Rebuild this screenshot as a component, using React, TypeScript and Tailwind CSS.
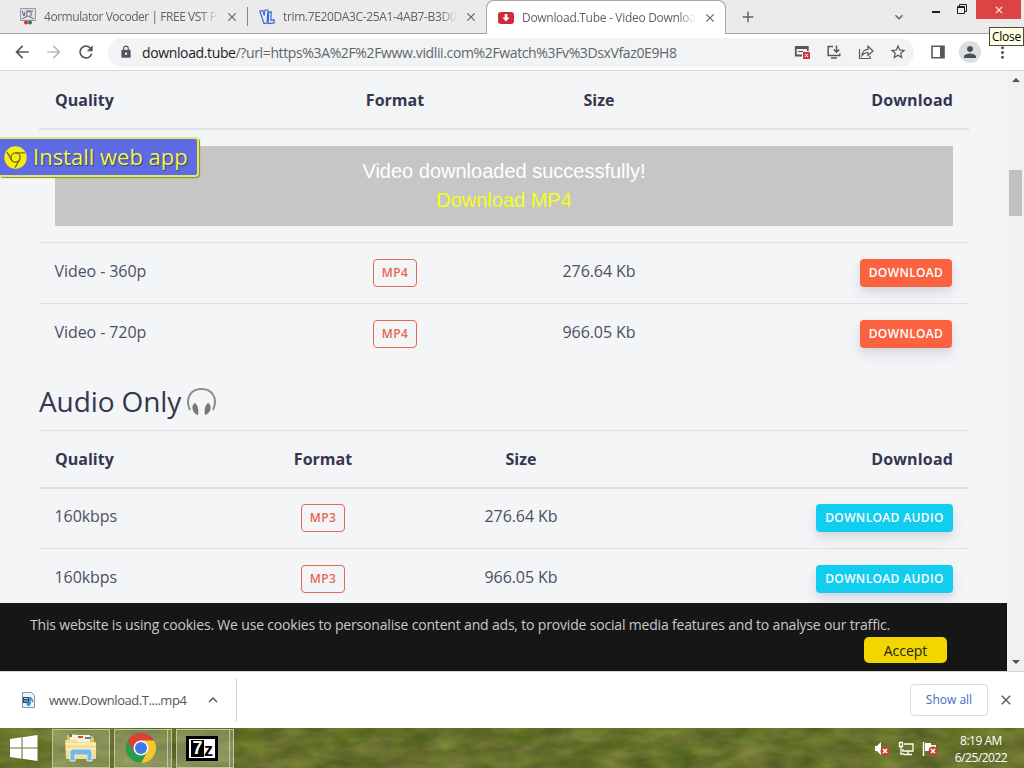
import type { ReactNode } from "react";
import { MdAdd, MdArrowBack, MdArrowForward, MdClose, MdExpandLess, MdExpandMore, MdLock, MdMoreVert, MdPerson, MdRefresh, MdStarBorder } from "react-icons/md";

type Row = { quality: string; format: string; size: string };

const videoRows: Row[] = [
    { quality: "Video - 360p", format: "MP4", size: "276.64 Kb" },
    { quality: "Video - 720p", format: "MP4", size: "966.05 Kb" },
];
const audioRows: Row[] = [
    { quality: "160kbps", format: "MP3", size: "276.64 Kb" },
    { quality: "160kbps", format: "MP3", size: "966.05 Kb" },
];

const videoCols = "grid-cols-[256px_200px_208px_1fr]";
const audioCols = "grid-cols-[184px_200px_196px_1fr]";

function VocoderIcon() {
    return (
        <svg width="16" height="17" viewBox="0 0 16 17" className="shrink-0">
            <path d="M.5.5h15v12H.5z" fill="#dfe1e6" stroke="#989ba3" />
            <path d="M2 3l2 5 1-4M6 3h7M10 9l4 2M2 11l5-3" stroke="#5d6374" fill="none" />
            <circle cx="9" cy="6" r="2.500" fill="none" stroke="#6b6f80" />
            <circle cx="6" cy="14.500" r="2" fill="#d12f39" />
            <circle cx="10" cy="14.500" r="2" fill="#277a45" />
        </svg>
    );
}

function VidliiIcon() {
    return (
        <svg width="16" height="16" viewBox="0 0 16 16" className="shrink-0">
            <path d="M.8 2.200l3-.7 1.400 5L6 1h3l-1 13-3 .5z" fill="#e4ecfb" stroke="#3c69cf" strokeWidth="1.200" />
            <path d="M9.700 3.200l2.600-.3-.5 8.200 3.400-.2v3l-6 .7z" fill="#e4ecfb" stroke="#3c69cf" strokeWidth="1.200" />
        </svg>
    );
}

function TubeIcon() {
    return (
        <svg width="16" height="12" viewBox="0 0 16 12" className="shrink-0">
            <rect width="16" height="12" rx="3" fill="#cf2a35" />
            <path d="M6.700 2h2.600v3.600h2.200L8 9.600 4.500 5.600h2.200z" fill="#fff" />
        </svg>
    );
}

function TabStrip() {
    return (
        <div className="flex h-[34px] w-full bg-[#ebebeb] text-[12px] text-[#5f6368]">
            <div className="flex w-[247px] items-center border-b border-[#a5a5a5] pl-5">
                <VocoderIcon />
                <span className="ml-2 w-[174px] whitespace-nowrap tracking-[-0.038em] mask-r-from-90%">4ormulator Vocoder | FREE VST P</span>
                <MdClose className="ml-[7px]" size={14} />
            </div>
            <div className="flex w-[239px] items-center border-b border-[#a5a5a5]">
                <span className="h-[19px] w-px bg-[#86888a]" />
                <span className="ml-[11px]"><VidliiIcon /></span>
                <span className="ml-2 w-[174px] whitespace-nowrap tracking-[-0.03em] mask-r-from-90%">trim.7E20DA3C-25A1-4AB7-B3D0</span>
                <MdClose className="ml-[7px]" size={14} />
            </div>
            <div className="flex w-[240px] items-center rounded-t-lg border-x border-t border-[#a5a5a5] bg-white pl-[11px]">
                <TubeIcon />
                <span className="ml-2 w-[174px] whitespace-nowrap tracking-[-0.025em] mask-r-from-90%">Download.Tube - Video Downloa</span>
                <MdClose className="ml-[7px]" size={14} />
            </div>
            <div className="flex flex-1 items-start border-b border-[#a5a5a5]">
                <MdAdd className="mt-[8px] ml-[13px]" size={18} />
                <MdExpandMore className="mt-[9px] ml-[134px]" size={16} />
                <span className="mt-[11px] ml-[25px] h-[2px] w-2 bg-[#1c1c1c]" />
                <svg className="mt-1 ml-[17px]" width="10" height="10" viewBox="0 0 10 10" fill="none" stroke="#1c1c1c">
                    <path d="M.5 2.500h7v7h-7zM.5 3.500h7" />
                    <path d="M2.500 2V.5h7v7H8" />
                </svg>
                <div className="ml-[9px] flex h-[19px] w-[45px] items-center justify-center bg-[#dd4245] text-white">
                    <MdClose size={12} />
                </div>
            </div>
        </div>
    );
}

function Toolbar() {
    return (
        <div className="flex h-[37px] w-full items-center border-b border-[#d5d6d8] bg-white pl-3 text-[#54575b]">
            <MdArrowBack size={20} />
            <MdArrowForward className="ml-3 text-[#b8babd]" size={20} />
            <MdRefresh className="ml-3" size={20} />
            <div className="ml-3 flex h-[29px] w-[806px] items-center rounded-full bg-[#f1f3f4] pl-[11px]">
                <MdLock size={14} />
                <span className="ml-[9px] w-[652px] text-[14px] tracking-[-0.37px] whitespace-nowrap text-[#62666a]">
                    <span className="text-[#202124]">download.tube</span>/?url=https%3A%2F%2Fwww.vidlii.com%2Fwatch%3Fv%3DsxVfaz0E9H8
                </span>
                <div className="flex items-center gap-4">
                    <svg width="16" height="16" viewBox="0 0 16 16" fill="none">
                        <path d="M8 11.500H1.800V3h12v4M1.500 4h12.600" stroke="currentColor" strokeWidth="1.800" />
                        <path d="M4 7.500h5" stroke="currentColor" />
                        <path d="M9 8h7v7H9z" fill="#cf3b37" />
                        <path d="M11 10l3 3m0-3l-3 3" stroke="#fff" />
                    </svg>
                    <svg width="16" height="16" viewBox="0 0 16 16" fill="none" stroke="currentColor" strokeWidth="1.500">
                        <path d="M7 2.500H2.200v9h11.600V9.500M5 14h6M10.500 1.500V8M7.700 5.500l2.800 2.800 2.800-2.800" />
                    </svg>
                    <svg width="16" height="16" viewBox="0 0 16 16" fill="none" stroke="currentColor" strokeWidth="1.200">
                        <path d="M1.500 5v9.500H12V12M4 11.500c.5-4.500 2-6 6-6.200V2.200L15 7l-5 4.500V8.500C7.500 8.500 5.800 9 4 11.500z" />
                    </svg>
                    <MdStarBorder className="-ml-px" size={18} />
                </div>
            </div>
            <svg className="ml-[17px]" width="14" height="14" viewBox="0 0 14 14">
                <path d="M1 1.200h12v11.600H1z" fill="none" stroke="currentColor" strokeWidth="1.600" />
                <path d="M9 1h4v12H9z" fill="currentColor" />
            </svg>
            <div className="ml-[14px] flex size-[22px] items-center justify-center rounded-full bg-[#dadde1] text-[#46505c]">
                <MdPerson size={18} />
            </div>
            <MdMoreVert className="ml-[12px]" size={19} />
        </div>
    );
}

function HeadRow({ cols }: { cols: string }) {
    return (
        <div className={"grid h-[59px] items-center border-b-2 border-[#dee1e5] text-[16px] font-bold text-[#36364f] " + cols}>
            <span className="pl-4">Quality</span>
            <span className="text-center">Format</span>
            <span className="text-center">Size</span>
            <span className="pr-4 text-right tracking-[0.01em]">Download</span>
        </div>
    );
}

function DataRow({ row, cols, children }: { row: Row; cols: string; children: ReactNode }) {
    return (
        <div className={"grid h-[60px] items-start pt-4 text-[16px] leading-6 tracking-[-0.005em] text-[#4c4f61] " + cols}>
            <span className="pl-[15.5px]">{row.quality}</span>
            <span className="flex h-7 w-11 items-center justify-center justify-self-center rounded border border-[#e2685a] text-[12px] font-semibold tracking-[0.03em] text-[#ec6552]">{row.format}</span>
            <span className="text-center">{row.size}</span>
            <div className="mr-4 justify-self-end">{children}</div>
        </div>
    );
}

function Headphones() {
    return (
        <svg width="29" height="30" viewBox="0 0 29 30" className="mt-[3px] ml-[6px]">
            <path d="M3 23C-2 12 3 2 14.500 2S31 12 26 23" fill="none" stroke="#8c8d90" strokeWidth="2" />
            <path d="M8 16c3 2 4 8 3 12-4-1-6-5-5.500-8.500C5.800 18 6.600 16.600 8 16zM21 16c-3 2-4 8-3 12 4-1 6-5 5.500-8.500C23.200 18 22.400 16.600 21 16z" fill="#77787b" />
        </svg>
    );
}

function Page() {
    return (
        <div className="relative h-[600px] w-[1007px] overflow-hidden bg-[#f3f5f7] pl-[39px]">
            <div className="w-[930px]">
                <HeadRow cols={videoCols} />
                <div className="mx-4 mt-4 h-20 bg-[#c6c6c6] pt-[11px] text-center font-['Liberation_Sans',sans-serif] text-[20px] leading-[29px]">
                    <p className="text-white">Video downloaded successfully!</p>
                    <p className="text-[#f4ff19]">Download MP4</p>
                </div>
                <div className="mt-4">
                    {videoRows.map((row) => (
                        <div key={row.size} className="border-t border-[#dee1e5]">
                            <DataRow row={row} cols={videoCols}>
                                <div className="mr-px flex h-7 w-[92px] items-center justify-center rounded bg-[#fb6340] text-[12px] font-semibold tracking-[0.03em] text-white shadow-[0_7px_14px_rgba(50,50,93,0.1),0_3px_6px_rgba(0,0,0,0.06)]">DOWNLOAD</div>
                            </DataRow>
                        </div>
                    ))}
                </div>
                <h2 className="flex h-[66px] items-center pt-[7px] text-[28px] leading-none font-normal tracking-[-0.1px] text-[#36364f]">
                    Audio Only <Headphones />
                </h2>
                <div className="border-t border-[#dee1e5] [&>div:first-child]:h-[58px]">
                    <HeadRow cols={audioCols} />
                    {audioRows.map((row) => (
                        <div key={row.size} className="-mt-px border-b border-[#dee1e5] not-nth-2:mt-0">
                            <DataRow row={row} cols={audioCols}>
                                <div className="flex h-7 w-[137px] items-center justify-center rounded bg-[#11cdef] text-[12px] font-semibold tracking-[0.03em] text-white shadow-[0_7px_14px_rgba(50,50,93,0.1),0_3px_6px_rgba(0,0,0,0.06)]">DOWNLOAD AUDIO</div>
                            </DataRow>
                        </div>
                    ))}
                </div>
            </div>

            <div className="absolute top-[66px] left-0 flex h-10 w-[199px] items-center rounded-r border-2 border-l-0 border-[#e2e669] bg-[#5e6be4] pl-1 text-[22px] text-[#f1f45b] shadow-[1px_1px_1px_#8b9028]">
                <svg width="23" height="23" viewBox="0 0 23 23" fill="none" stroke="#69682f" strokeWidth="1.300">
                    <circle cx="11.500" cy="11.500" r="11.200" fill="#f9ee0a" stroke="none" />
                    <circle cx="11.500" cy="11.500" r="4.600" />
                    <path d="M11.500 6.900h9.500M7.500 13.800L3 6M15.500 13.800l-4.500 8" />
                </svg>
                <span className="-mt-[2px] ml-[6px] whitespace-nowrap [text-shadow:1px_1px_1px_#3d4150]">Install web app</span>
            </div>

            <div className="absolute bottom-0 left-0 h-[68px] w-full bg-[#161616] pt-3 pl-[30px] text-[14px] text-[#c9c9c9]">
                <p className="h-[22px] leading-[19px] font-medium tracking-[-0.178px] whitespace-nowrap">This website is using cookies. We use cookies to personalise content and ads, to provide social media features and to analyse our traffic.</p>
                <button className="ml-[834px] flex h-[26px] w-[83px] items-center justify-center rounded-[5px] bg-[#f1d600] text-[14px] text-[#222]">Accept</button>
            </div>
        </div>
    );
}

function ScrollBar() {
    return (
        <div className="flex h-[600px] w-[17px] flex-col items-center bg-[#f1f1f1]">
            <svg width="8" height="4" viewBox="0 0 8 4" className="mt-[7px]"><path d="M0 4l4-4 4 4z" fill="#505050" /></svg>
            <span className="mt-[88px] h-[46px] w-[13px] bg-[#c1c1c1]" />
            <svg width="8" height="4" viewBox="0 0 8 4" className="mt-auto mb-[7px]"><path d="M0 0l4 4 4-4z" fill="#505050" /></svg>
        </div>
    );
}

function DownloadShelf() {
    return (
        <div className="flex h-[57px] w-full items-center border-t border-[#d5d6d8] bg-white text-[#54575b]">
            <svg className="ml-[22px]" width="13" height="16" viewBox="0 0 13 16">
                <path d="M.5.500h9l3 3v12H.500z" fill="#eef3f7" stroke="#8b9299" />
                <path d="M1 5h6v6H1z" fill="#26485f" />
                <path d="M2 6.500h4M2 9h4" stroke="#b9dbed" />
                <path d="M8 12V5c1 2 3 2 2.500 5" fill="none" stroke="#2b8fd0" strokeWidth="1.500" />
                <circle cx="6.500" cy="12" r="2" fill="#2b8fd0" />
            </svg>
            <span className="mt-px ml-[14px] w-[155px] text-[13px] tracking-[-0.45px] whitespace-nowrap">www.Download.T....mp4</span>
            <MdExpandLess size={18} />
            <span className="ml-[14px] h-[44px] w-px bg-[#d0d2d4]" />
            <button className="-mt-px ml-auto flex h-8 w-[78px] items-center justify-center rounded border border-[#dadce0] text-[12px] font-medium text-[#3c6bc0]">Show all</button>
            <MdClose className="-mt-px mr-[10px] ml-[10px]" size={16} />
        </div>
    );
}

function ExplorerIcon() {
    return (
        <svg width="34" height="32" viewBox="0 0 34 32">
            <path d="M3 3l8-1 2 2h15l2 2v20H3z" fill="#e5c45f" />
            <path d="M6 3h20v8H6z" fill="#f6f1d8" />
            <path d="M5 2h3v3H5z" fill="#3b9b52" />
            <path d="M14 4h5v2h-5z" fill="#cf4d37" />
            <path d="M21 5h6v2h-6z" fill="#4686b8" />
            <path d="M1 8h11l2 2h18v17H2z" fill="#f5df8c" />
            <path d="M2 12h30M2 17h30" stroke="#fbedb4" strokeWidth="2" />
            <path d="M6 29v-9q0-3 3-3h16q3 0 3 3v9h-5v-6H11v6z" fill="#78b9e3" stroke="#d7f0fb" />
        </svg>
    );
}

function ChromeIcon() {
    return (
        <svg width="32" height="32" viewBox="0 0 32 32">
            <circle cx="16" cy="16" r="15" fill="#2a9a4b" />
            <path d="M3 8.500A15 15 0 0 1 29 8.500L16 9l-7 11z" fill="#df4034" />
            <path d="M29 8.500A15 15 0 0 1 16 31l6.500-11.500L16 8.500z" fill="#f7c82e" />
            <circle cx="16" cy="16" r="7.500" fill="#fff" />
            <circle cx="16" cy="16" r="6" fill="#3c79e6" />
        </svg>
    );
}

function TaskButton({ width, children }: { width: string; children: ReactNode }) {
    return (
        <div className={"flex h-[39px] items-center justify-center border border-[#c0c6a2] bg-[#d5dcba]/30 " + width}>{children}</div>
    );
}

// small red cross that sits on muted or disconnected tray icons
function TrayCross() {
    return (
        <>
            <circle cx="11" cy="10" r="4.500" fill="#cb3e38" />
            <path d="M9 8l4 4m0-4l-4 4" stroke="#fff" strokeWidth="1.500" />
        </>
    );
}

// mottled grass wallpaper seen through the taskbar
function Grass() {
    return (
        <svg className="absolute inset-0" width="1024" height="40">
            <filter id="grass" x="0" y="0" width="100%" height="100%" colorInterpolationFilters="sRGB">
                <feTurbulence type="fractalNoise" baseFrequency="0.03 0.07" numOctaves="3" seed="8" />
                <feColorMatrix values="0.25 0.1 0 0 0.225  0.25 0 0 0 0.315  0.12 0.12 0 0 0.05  0 0 0 0 1" />
            </filter>
            <rect width="1024" height="40" filter="url(#grass)" />
        </svg>
    );
}

function Taskbar() {
    return (
        <div className="relative h-10 w-full bg-[#67712f] text-white">
            <Grass />
            <div className="relative flex h-10 items-center">
                <svg className="ml-[10px]" width="28" height="26" viewBox="0 0 28 26" fill="#fff">
                    <path d="M0 4l11.500-1.700v10.200H0zM12.500 2.200L27.500 0v12.500h-15zM0 13.500h11.500v10.200L0 22zM12.500 13.500h15V26l-15-2.200z" />
                </svg>
                <div className="ml-[14px] flex">
                    <TaskButton width="w-[58px]"><ExplorerIcon /></TaskButton>
                    <div className="ml-1 flex">
                        <TaskButton width="w-[54px]"><ChromeIcon /></TaskButton>
                        <span className="h-[39px] w-[4px] border-y border-r border-[#c0c6a2] bg-[#d5dcba]/30" />
                    </div>
                    <div className="ml-1 flex">
                        <TaskButton width="w-[54px]">
                            <div className="-ml-[2px] flex h-[25px] w-8 items-center justify-center border-[3px] border-black bg-white font-['Liberation_Sans',sans-serif] text-[18px] leading-none font-bold">
                                <span className="flex h-[17px] w-[13px] items-center justify-center bg-black text-white">7</span>
                                <span className="mt-[3px] text-black">z</span>
                            </div>
                        </TaskButton>
                        <span className="h-[39px] w-[4px] border-y border-r border-[#c0c6a2] bg-[#d5dcba]/30" />
                    </div>
                </div>
                <div className="mt-[2px] ml-auto flex items-center gap-[8px]">
                    <svg width="16" height="16" viewBox="0 0 16 16">
                        <path d="M1 5h2l4-4v13l-4-4H1z" fill="#fff" />
                        <TrayCross />
                    </svg>
                    <svg width="16" height="16" viewBox="0 0 16 16" fill="none" stroke="#fff" strokeWidth="1.300">
                        <path d="M6 3h9v7H5V8M10 10v3M6 13.500h8M1.500 1.500h3v4h-3zM3 6v7h3" />
                    </svg>
                    <svg width="16" height="16" viewBox="0 0 16 16">
                        <path d="M1.500 1v14" stroke="#fff" strokeWidth="1.500" />
                        <path d="M3 2h6v2h5v6H3z" fill="#fff" />
                        <TrayCross />
                    </svg>
                </div>
                <div className="mt-[2px] mr-3 ml-[12px] w-[62px] text-center text-[12px] leading-[17px] tracking-[-0.04em] whitespace-nowrap">
                    <p>8:19 AM</p>
                    <p>6/25/2022</p>
                </div>
            </div>
        </div>
    );
}

export default function App() {
    return (
        <div className="relative flex h-[768px] w-[1024px] flex-col overflow-hidden font-['Open_Sans',sans-serif]">
            <TabStrip />
            <Toolbar />
            <div className="flex">
                <Page />
                <ScrollBar />
            </div>
            <DownloadShelf />
            <Taskbar />
            <div className="absolute top-[27px] left-[989px] flex h-[19px] w-[35px] items-center justify-center border border-[#4b4b4b] bg-[#ffffe1] text-[12px] tracking-[-0.02em] text-black">Close</div>
        </div>
    );
}
